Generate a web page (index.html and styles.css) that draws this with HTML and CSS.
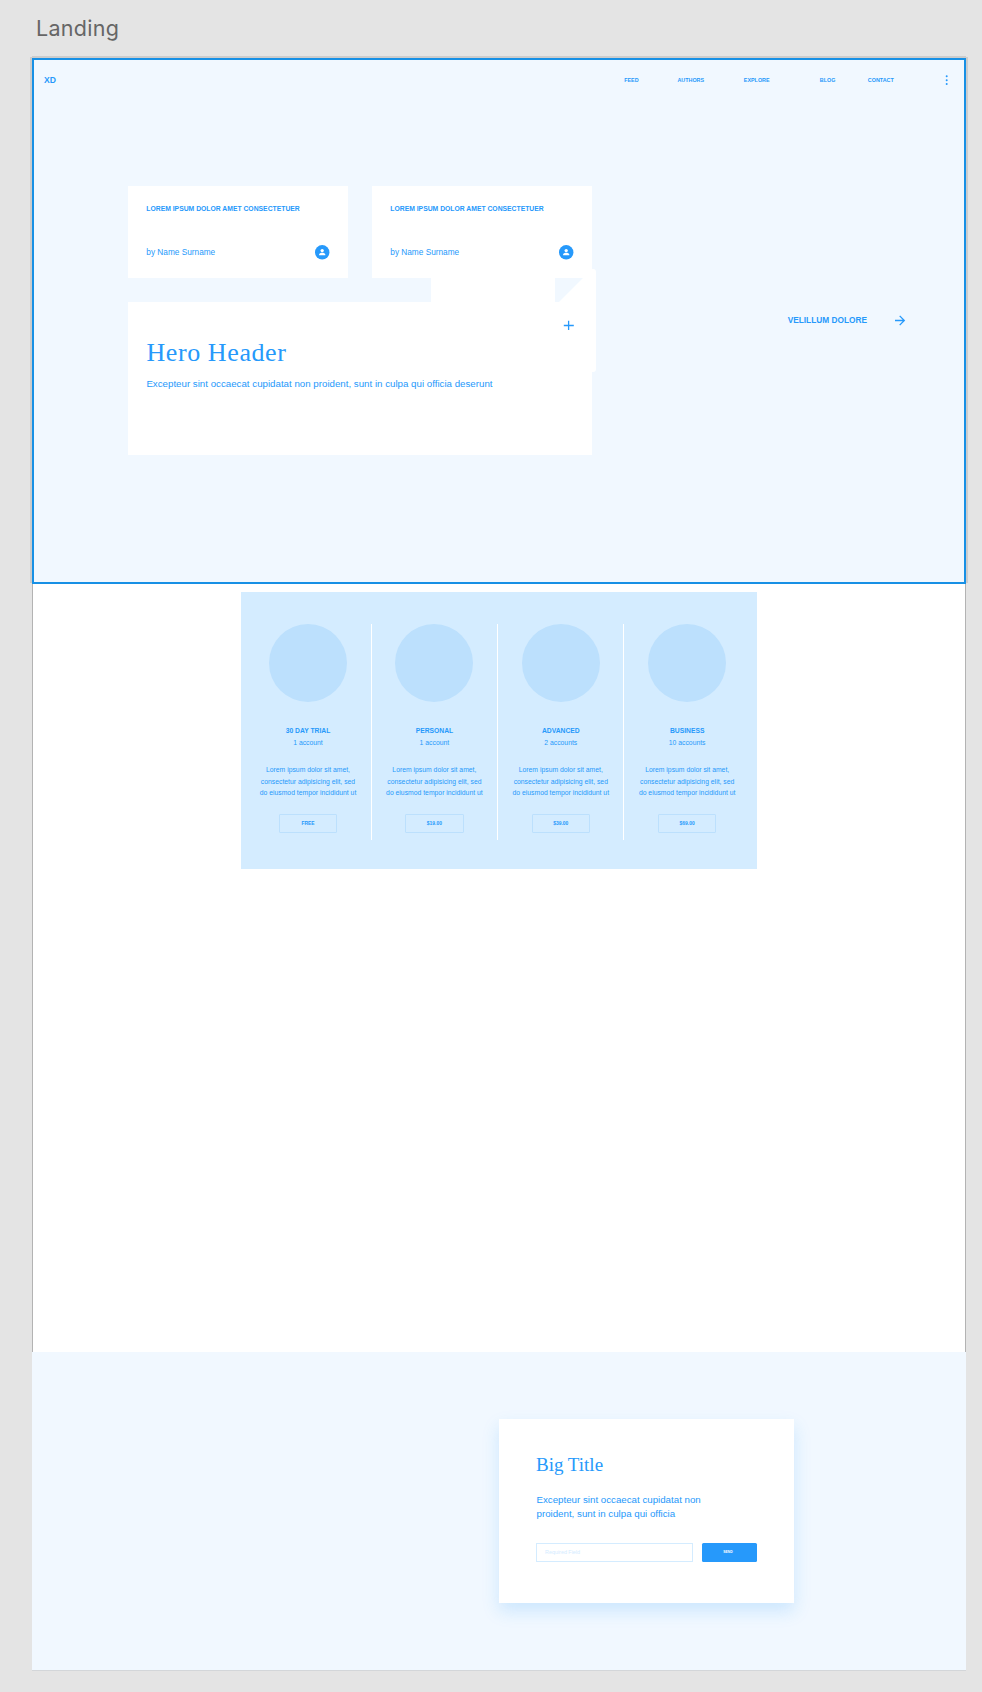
FILE: index.html
```html
<!DOCTYPE html>
<html lang="en">
<head>
<meta charset="utf-8">
<title>Landing</title>
<link rel="stylesheet" href="styles.css">
</head>
<body>
<h1 class="board-title">Landing</h1>
<main class="board">
  <section class="hero">
    <header class="nav">
      <a class="logo">XD</a>
      <nav class="links">
        <a class="feed">FEED</a><a class="authors">AUTHORS</a><a class="explore">EXPLORE</a><a class="blog">BLOG</a><a class="contact">CONTACT</a>
      </nav>
      <svg class="more" width="4" height="12" viewBox="0 0 4 12"><circle cx="1.7" cy="2.3" r="1"/><circle cx="1.7" cy="6.3" r="1"/><circle cx="1.7" cy="10" r="1"/></svg>
    </header>
    <div class="hero-body">
      <div class="cards">
        <article class="card">
          <h2>LOREM IPSUM DOLOR AMET CONSECTETUER</h2>
          <div class="author"><span>by Name Surname</span>
            <svg class="avatar" viewBox="0 0 15 15"><circle class="disc" cx="7.2" cy="7.3" r="7.2"/><circle cx="7.2" cy="5.6" r="1.65"/><path d="M4.1 10.3V9.5C4.1 8.3 5.8 7.8 7.2 7.8s3.1.5 3.1 1.7v.8z"/></svg>
          </div>
        </article>
        <article class="card">
          <h2>LOREM IPSUM DOLOR AMET CONSECTETUER</h2>
          <div class="author"><span>by Name Surname</span>
            <svg class="avatar" viewBox="0 0 15 15"><circle class="disc" cx="7.2" cy="7.3" r="7.2"/><circle cx="7.2" cy="5.6" r="1.65"/><path d="M4.1 10.3V9.5C4.1 8.3 5.8 7.8 7.2 7.8s3.1.5 3.1 1.7v.8z"/></svg>
          </div>
        </article>
        <article class="feature">
          <h2>Hero Header</h2>
          <p>Excepteur sint occaecat cupidatat non proident, sunt in culpa qui officia deserunt</p>
          <svg class="overlay" width="166" height="104" viewBox="0 0 166 104">
            <path class="paper" d="M0 8h124v25h4L161 0H162Q165 0 165 3V100Q165 103 162 103H0z"/>
            <path class="plus" d="M132.8 56.5h10M137.6 51.8v9.2"/>
          </svg>
        </article>
      </div>
      <a class="cta"><span>VELILLUM DOLORE</span>
        <svg width="11" height="11" viewBox="0 0 11 11"><path d="M0 5.5h9.2M4.7.9l4.6 4.6-4.6 4.6"/></svg>
      </a>
    </div>
  </section>
  <section class="middle">
    <div class="pricing">
      <div class="plan"><i class="circle"></i><h3>30 DAY TRIAL</h3><span class="count">1 account</span><p>Lorem ipsum dolor sit amet,<br>consectetur adipisicing elit, sed<br>do eiusmod tempor incididunt ut</p><a class="price">FREE</a></div>
      <div class="plan"><i class="circle"></i><h3>PERSONAL</h3><span class="count">1 account</span><p>Lorem ipsum dolor sit amet,<br>consectetur adipisicing elit, sed<br>do eiusmod tempor incididunt ut</p><a class="price">$19.00</a></div>
      <div class="plan"><i class="circle"></i><h3>ADVANCED</h3><span class="count">2 accounts</span><p>Lorem ipsum dolor sit amet,<br>consectetur adipisicing elit, sed<br>do eiusmod tempor incididunt ut</p><a class="price">$39.00</a></div>
      <div class="plan"><i class="circle"></i><h3>BUSINESS</h3><span class="count">10 accounts</span><p>Lorem ipsum dolor sit amet,<br>consectetur adipisicing elit, sed<br>do eiusmod tempor incididunt ut</p><a class="price">$69.00</a></div>
    </div>
  </section>
  <footer class="signup">
    <div class="panel">
      <h2>Big Title</h2>
      <p>Excepteur sint occaecat cupidatat non<br>proident, sunt in culpa qui officia</p>
      <div class="form"><div class="field">Required Field</div><a class="send">SEND</a></div>
    </div>
  </footer>
</main>
</body>
</html>
```
FILE: styles.css
```css
* { box-sizing: border-box; }
body { margin: 0; height: 1692px; background: #e4e4e4; color: #2699fb; font-family: "Liberation Sans", Arial, sans-serif; overflow: hidden; }
h1, h2, h3, p { margin: 0; }
svg { display: block; fill: none; stroke: none; }
.board-title { height: 58px; padding: 14px 0 0 36px; font: 400 21.5px/28px Inter, sans-serif; letter-spacing: .3px; color: #666; }
.board { width: 934px; margin-left: 32px; }

.hero { height: 526px; border: 2px solid #1790e5; background: #f1f8ff; box-shadow: 0 -2px 0 #ccc, -2px -1px 0 #ccc, 2px -1px 0 #ccc, 0 1px 0 #ddd; }
.nav { display: flex; height: 40px; align-items: center; padding: 0 15px 0 10px; }
.logo { flex: 1; font-size: 8.6px; font-weight: 700; }
.links { display: grid; grid-template-columns: 53.2px 66.4px 76px 48px 77.2px; font-size: 5.4px; font-weight: 700; }
.more { fill: #2699fb; }
.hero-body { display: flex; align-items: flex-start; padding: 86px 0 0 94px; }
.cards { display: grid; grid-template-columns: 219.7px 219.7px; grid-template-rows: 91.7px 153px; gap: 24.3px; }
.card { display: flex; flex-direction: column; justify-content: space-between; padding: 17.5px 18px 18px 18.3px; background: #fff; }
.card h2 { font-size: 6.8px; line-height: 10px; white-space: nowrap; }
.author { display: flex; align-items: center; justify-content: space-between; font-size: 8.27px; }
.avatar { width: 15px; height: 15px; fill: #fff; }
.avatar .disc { fill: #2699fb; }
.feature { position: relative; grid-column: 1 / 3; padding: 35px 18.4px 0; background: #fff; }
.feature h2 { font: 400 26px/32px "Liberation Serif", serif; letter-spacing: .6px; }
.feature p { margin-top: 8px; font-size: 9.73px; line-height: 14px; white-space: nowrap; }
.overlay { position: absolute; left: 303px; top: -33px; }
.paper { fill: #fff; }
.plus { stroke: #2699fb; stroke-width: 1.3; }
.cta { display: flex; align-items: center; margin: 128px 0 0 196px; font-size: 8.3px; font-weight: 700; line-height: 12px; }
.cta span { width: 107px; }
.cta svg { stroke: #2699fb; stroke-width: 1.3; }

.middle { height: 768px; padding: 8px 0 0 208px; background: #fff; border: solid #b3b3b3; border-width: 0 1px; }
.pricing { display: grid; grid-template-columns: repeat(4, 126.4px); width: 515.6px; height: 276.7px; padding: 32px 4.3px; background: #d4ecff; }
.plan { height: 216px; display: flex; flex-direction: column; align-items: center; border-right: 1px solid #fff; text-align: center; white-space: nowrap; }
.plan:last-child { border-right-color: transparent; }
.circle { width: 78px; height: 78px; border-radius: 50%; background: #bce0fd; }
.plan h3 { margin-top: 24px; font-size: 6.75px; line-height: 10px; }
.count { margin-top: 2px; font-size: 6.82px; line-height: 10px; }
.plan p { margin-top: 16px; font-size: 6.82px; line-height: 11.5px; }
.price { width: 58.5px; height: 19px; margin-top: 15.5px; border: 1px solid #bce0fd; border-radius: 1px; font-size: 4.95px; font-weight: 700; line-height: 18.5px; }

.signup { height: 319px; padding: 67px 0 0 467px; background: #f1f8ff; border-bottom: 1px solid #d3d6d9; }
.panel { width: 295.3px; height: 184.3px; padding: 34px 37px; background: #fff; box-shadow: 0 8px 16px rgba(38, 153, 251, .18); }
.panel h2 { font: 400 19px/24px "Liberation Serif", serif; }
.panel p { padding-left: .5px; margin-top: 16px; font-size: 9.73px; line-height: 14px; white-space: nowrap; }
.form { display: flex; gap: 9px; margin-top: 22px; }
.field { width: 157px; height: 19px; padding-left: 8px; border: 1px solid #d4ecff; font-size: 5.4px; line-height: 17px; color: #d4ecff; }
.send { width: 55.7px; height: 19px; padding-right: 3px; border-radius: 1.5px; background: #2699fb; color: #fff; font-size: 3.4px; font-weight: 700; line-height: 18px; text-align: center; }
```
